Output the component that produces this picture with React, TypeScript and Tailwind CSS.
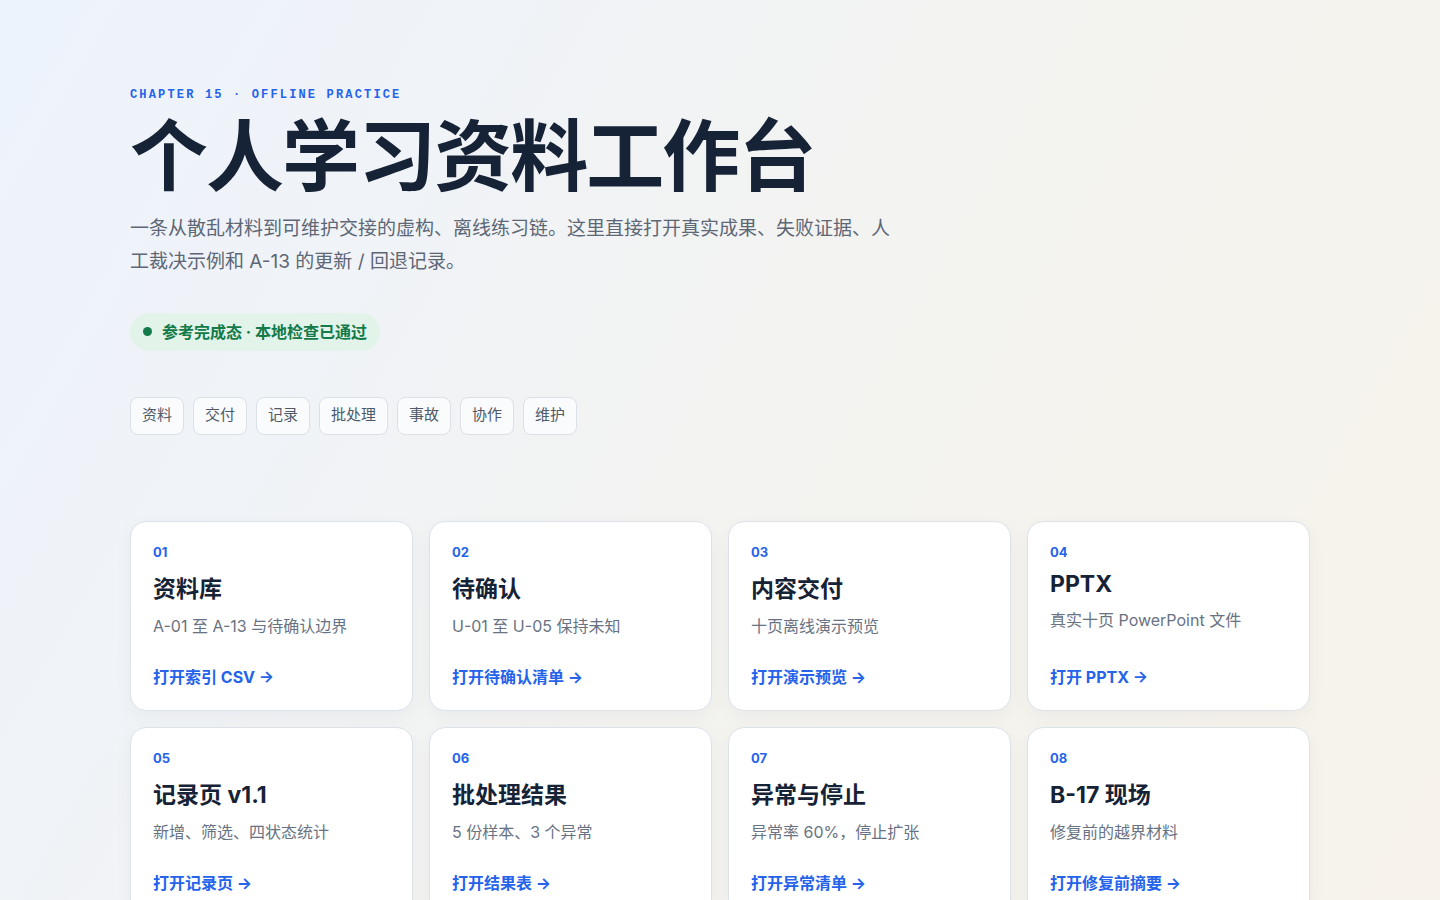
const TAGS = ["资料", "交付", "记录", "批处理", "事故", "协作", "维护"];

const CARDS = [
  { no: "01", title: "资料库", desc: "A-01 至 A-13 与待确认边界", link: "打开索引 CSV" },
  { no: "02", title: "待确认", desc: "U-01 至 U-05 保持未知", link: "打开待确认清单" },
  { no: "03", title: "内容交付", desc: "十页离线演示预览", link: "打开演示预览" },
  { no: "04", title: "PPTX", desc: "真实十页 PowerPoint 文件", link: "打开 PPTX" },
  { no: "05", title: "记录页 v1.1", desc: "新增、筛选、四状态统计", link: "打开记录页" },
  { no: "06", title: "批处理结果", desc: "5 份样本、3 个异常", link: "打开结果表" },
  { no: "07", title: "异常与停止", desc: "异常率 60%，停止扩张", link: "打开异常清单" },
  { no: "08", title: "B-17 现场", desc: "修复前的越界材料", link: "打开修复前摘要" },
];

const SANS = "font-['Inter','Noto_Sans_CJK_SC',sans-serif]";

export default function App() {
  return (
    <div
      className={`min-h-screen bg-[linear-gradient(120deg,#edf3fd_0%,#f3f3f1_50%,#f7f3ea_100%)] ${SANS}`}
    >
      <main className="mx-auto w-[1180px] pt-[86px] pb-20">
        <p className="font-['Liberation_Mono',monospace] text-[12px] font-bold tracking-[0.18em] text-[#2563eb]">
          CHAPTER 15 · OFFLINE PRACTICE
        </p>
        <h1 className="mt-[6px] text-[78px] font-bold leading-[1.2] tracking-[-0.025em] text-[#162235]">
          个人学习资料工作台
        </h1>
        <p className="mt-[8px] max-w-[770px] text-[19px] leading-[33px] text-[#5d6776]">
          一条从散乱材料到可维护交接的虚构、离线练习链。这里直接打开真实成果、失败证据、人工裁决示例和 A-13 的更新 / 回退记录。
        </p>

        <div className="mt-[35px] inline-flex h-[38px] items-center gap-[10px] rounded-full bg-[#e2f3e9] pl-[13px] pr-[13px]">
          <span className="h-[9px] w-[9px] rounded-full bg-[#137a4a]" />
          <span className="text-[16px] font-bold text-[#137a4a]">参考完成态 · 本地检查已通过</span>
        </div>

        <div className="mt-[46px] flex gap-[9px]">
          {TAGS.map((t) => (
            <span
              key={t}
              className="flex h-[38px] items-center rounded-[8px] border border-[#dbe0e7] bg-[#fafbfc] px-[11px] text-[15px] text-[#4f5968]"
            >
              {t}
            </span>
          ))}
        </div>

        <div className="mt-[86px] grid grid-cols-4 gap-4">
          {CARDS.map((c) => (
            <a
              key={c.no}
              href="#"
              className="flex h-[190px] flex-col rounded-[16px] border border-[#dce2ea] bg-white px-[22px] pt-[21px] pb-[21px] shadow-[0_6px_20px_rgba(15,23,42,0.04)]"
            >
              <span className="text-[13px] font-bold leading-[18px] text-[#2563eb]">{c.no}</span>
              <h2 className="mt-[9px] text-[23px] font-bold leading-[normal] text-[#162235]">{c.title}</h2>
              <p className="mt-[10px] text-[16px] leading-[24px] text-[#687282]">{c.desc}</p>
              <span className="mt-auto text-[16px] font-bold leading-[24px] text-[#2563eb]">
                {c.link} →
              </span>
            </a>
          ))}
        </div>
      </main>
    </div>
  );
}
